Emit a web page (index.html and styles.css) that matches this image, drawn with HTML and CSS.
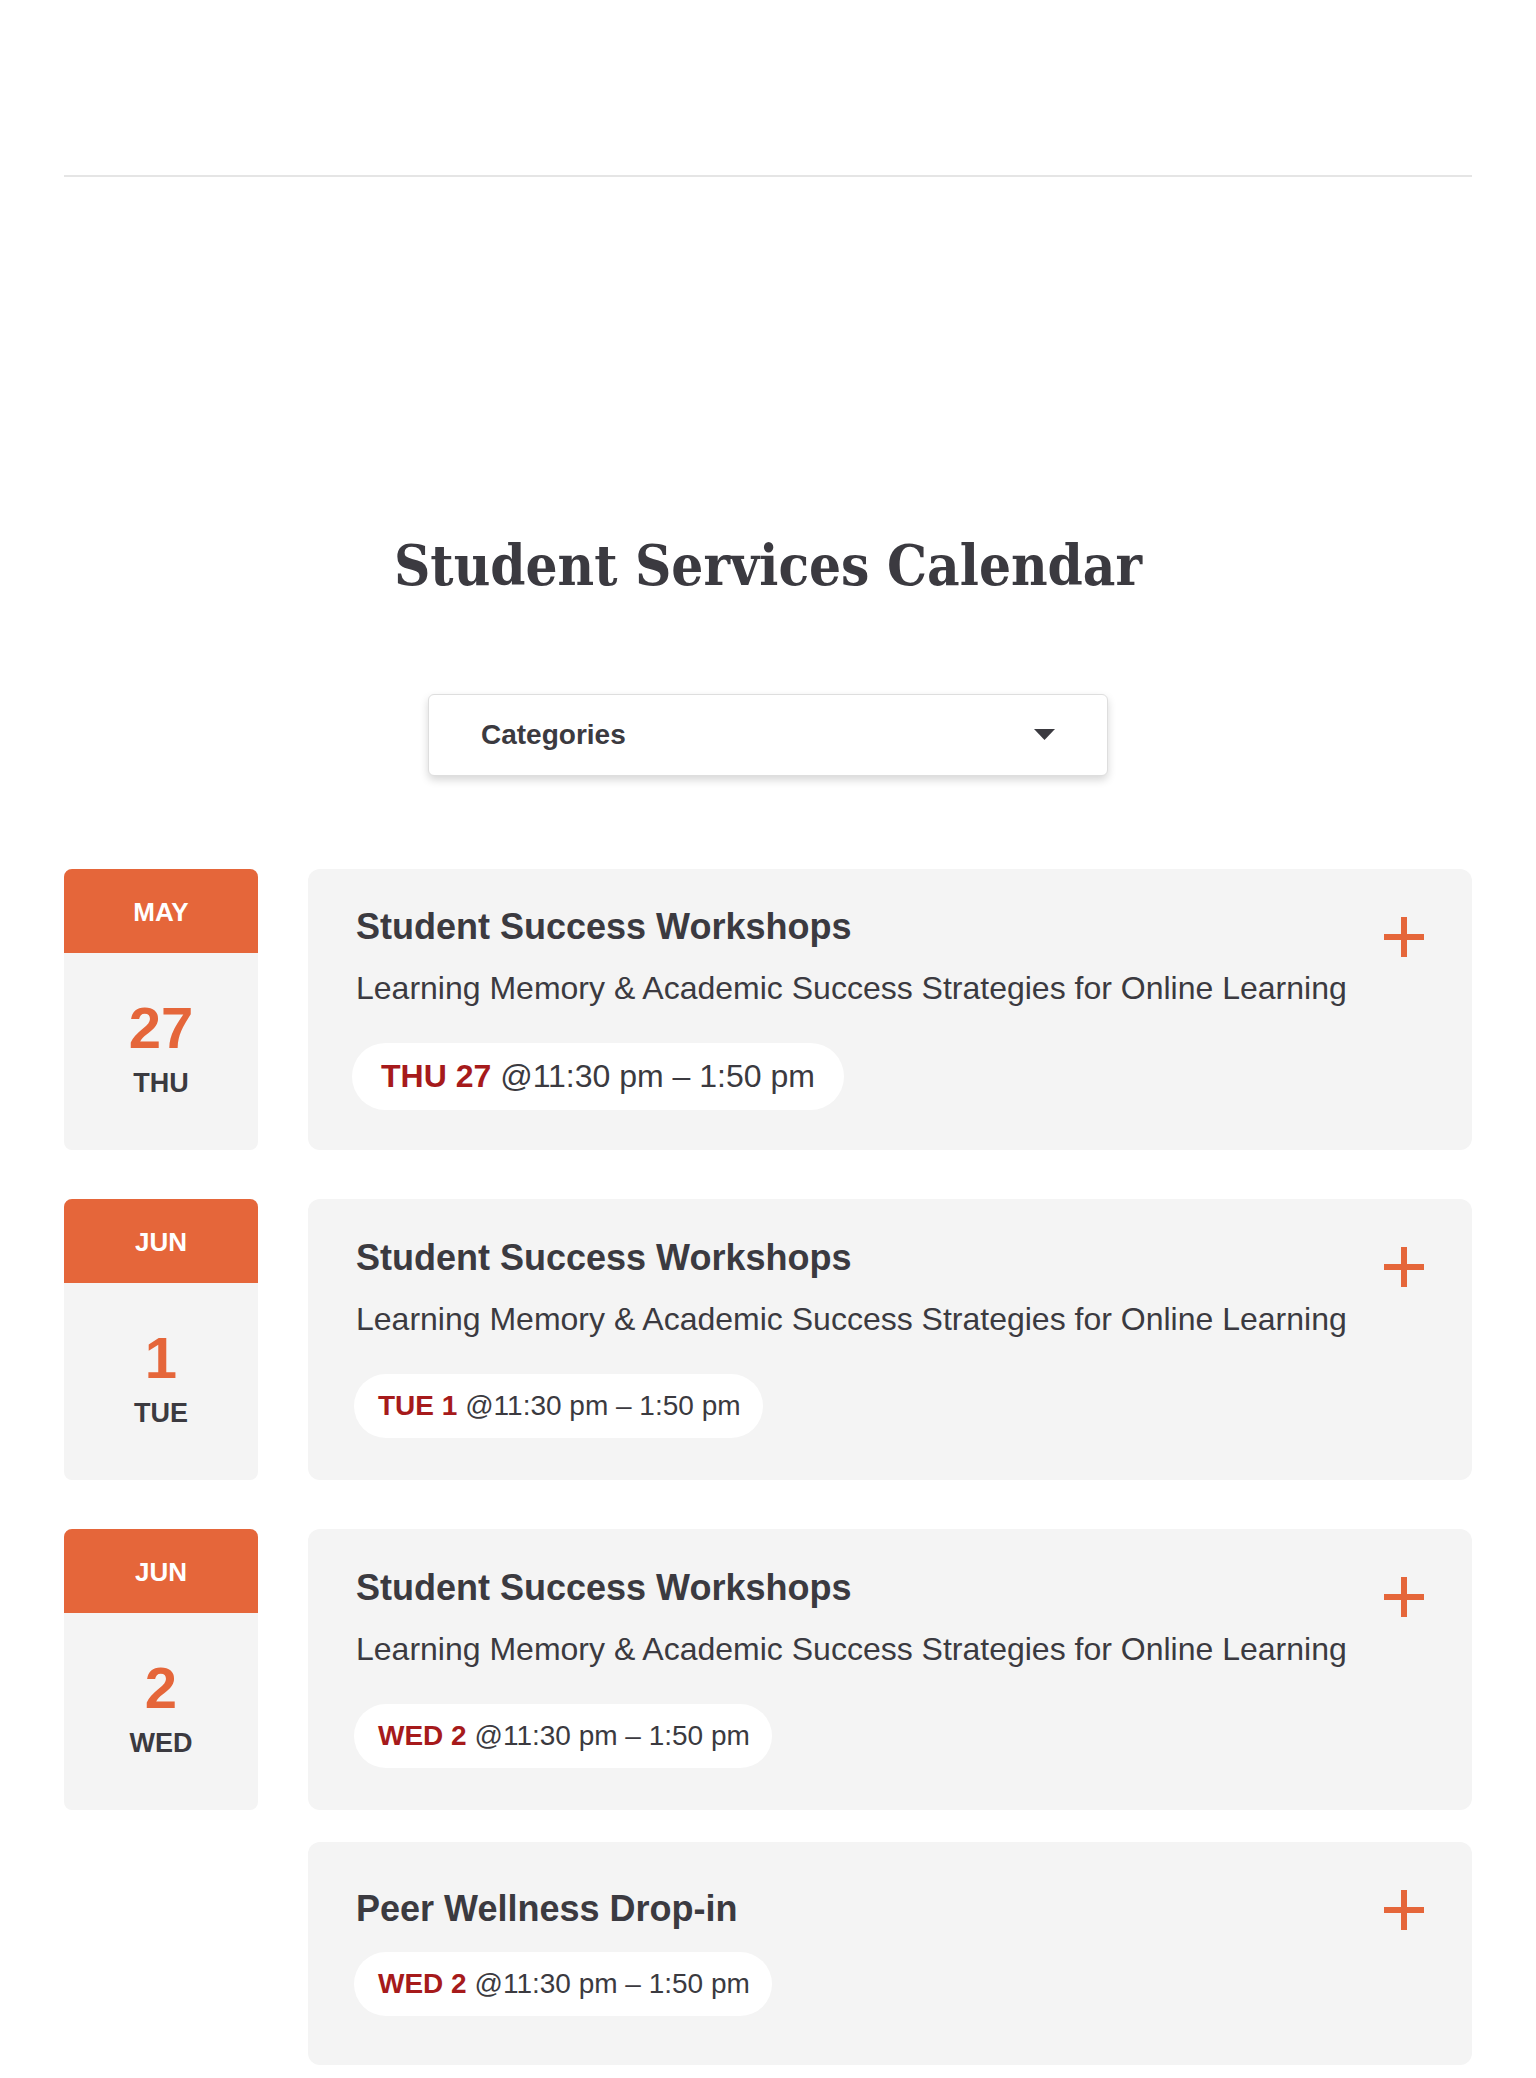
FILE: index.html
```html
<!DOCTYPE html>
<html lang="en">

<head>
    <meta charset="UTF-8">
    <meta name="viewport" content="width=device-width, initial-scale=1.0">
    <title>Student Services Calendar</title>
    <link rel="stylesheet" href="styles.css">
</head>

<body>
    <header class="site-header"></header>

    <main class="calendar">
        <h1 class="calendar__title">Student Services Calendar</h1>

        <div class="calendar__filter">
            <button class="filter-select" type="button">
                Categories
                <svg class="filter-select__caret" viewBox="0 0 21 11" width="21" height="11">
                    <path d="M0 0h21L10.5 11z" fill="currentColor" />
                </svg>
            </button>
        </div>

        <div class="day-list">
            <section class="day">
                <div class="date-box">
                    <div class="date-box__month">MAY</div>
                    <div class="date-box__body">
                        <div class="date-box__num">27</div>
                        <div class="date-box__weekday">THU</div>
                    </div>
                </div>
                <div class="day__events">
                    <article class="event-card event-card--detailed">
                        <h2 class="event-card__title">Student Success Workshops</h2>
                        <p class="event-card__desc">Learning Memory &amp; Academic Success Strategies for Online Learning</p>
                        <div class="event-time event-time--lg"><strong>THU 27</strong> @11:30 pm – 1:50 pm</div>
                        <span class="event-card__plus"></span>
                    </article>
                </div>
            </section>

            <section class="day">
                <div class="date-box">
                    <div class="date-box__month">JUN</div>
                    <div class="date-box__body">
                        <div class="date-box__num">1</div>
                        <div class="date-box__weekday">TUE</div>
                    </div>
                </div>
                <div class="day__events">
                    <article class="event-card event-card--detailed">
                        <h2 class="event-card__title">Student Success Workshops</h2>
                        <p class="event-card__desc">Learning Memory &amp; Academic Success Strategies for Online Learning</p>
                        <div class="event-time"><strong>TUE 1</strong> @11:30 pm – 1:50 pm</div>
                        <span class="event-card__plus"></span>
                    </article>
                </div>
            </section>

            <section class="day">
                <div class="date-box">
                    <div class="date-box__month">JUN</div>
                    <div class="date-box__body">
                        <div class="date-box__num">2</div>
                        <div class="date-box__weekday">WED</div>
                    </div>
                </div>
                <div class="day__events">
                    <article class="event-card event-card--detailed">
                        <h2 class="event-card__title">Student Success Workshops</h2>
                        <p class="event-card__desc">Learning Memory &amp; Academic Success Strategies for Online Learning</p>
                        <div class="event-time"><strong>WED 2</strong> @11:30 pm – 1:50 pm</div>
                        <span class="event-card__plus"></span>
                    </article>
                    <article class="event-card">
                        <h2 class="event-card__title">Peer Wellness Drop-in</h2>
                        <div class="event-time"><strong>WED 2</strong> @11:30 pm – 1:50 pm</div>
                        <span class="event-card__plus"></span>
                    </article>
                </div>
            </section>
        </div>
    </main>
</body>

</html>
```

FILE: styles.css
```css
:root {
    --text-color: #3b3a40;
    --accent-color: #e5663a;
    --red-color: #a61a1b;
    --card-bg: #f4f4f4;
    --line-color: #e5e5e5;
    --white-color: #fff;
}

body {
    margin: 0;
    font-family: 'Liberation Sans', Arial, sans-serif;
    color: var(--text-color);
    background: var(--white-color);
}

.site-header {
    height: 175px;
    margin: 0 64px;
    border-bottom: 2px solid var(--line-color);
}

.calendar {
    padding: 0 64px 60px;
}

.calendar__title {
    margin: 355px 0 0;
    text-align: center;
    font-family: 'DejaVu Serif Condensed', 'DejaVu Serif', serif;
    font-stretch: condensed;
    font-size: 56px;
    font-weight: 700;
    line-height: 1.2;
}

.calendar__filter {
    display: flex;
    justify-content: center;
    margin-top: 95px;
}

.filter-select {
    width: 680px;
    height: 82px;
    display: flex;
    align-items: center;
    justify-content: space-between;
    padding: 0 52px 0 52px;
    background: var(--white-color);
    border: 1px solid #dedede;
    border-radius: 6px;
    box-shadow: 0 4px 8px rgba(0, 0, 0, 0.16);
    font-family: inherit;
    font-size: 28px;
    font-weight: 700;
    color: var(--text-color);
    cursor: pointer;
}

.filter-select__caret {
    display: block;
    margin-top: -2px;
}

.day-list {
    margin-top: 93px;
    display: flex;
    flex-direction: column;
    gap: 49px;
}

.day {
    display: flex;
    align-items: flex-start;
    gap: 50px;
}

.date-box {
    width: 194px;
    flex-shrink: 0;
    border-radius: 8px;
    overflow: hidden;
    background: var(--card-bg);
    text-align: center;
    font-weight: 700;
}

.date-box__month {
    height: 84px;
    line-height: 86px;
    background: var(--accent-color);
    color: var(--white-color);
    font-size: 26px;
}

.date-box__body {
    padding: 46px 0 50px;
}

.date-box__num {
    font-size: 58px;
    line-height: 58px;
    color: var(--accent-color);
}

.date-box__weekday {
    margin-top: 10px;
    font-size: 27px;
    line-height: 1.2;
}

.day__events {
    flex: 1;
    display: flex;
    flex-direction: column;
    gap: 32px;
}

.event-card {
    position: relative;
    min-height: 223px;
    box-sizing: border-box;
    padding: 36px 48px 40px;
    display: flex;
    flex-direction: column;
    justify-content: center;
    align-items: flex-start;
    background: var(--card-bg);
    border-radius: 12px;
}

.event-card--detailed {
    min-height: 281px;
}

.event-card__title {
    margin: 0 0 22px;
    font-size: 36px;
    font-weight: 700;
}

.event-card__desc {
    margin: 0 0 36px;
    font-size: 32px;
}

.event-time {
    margin-left: -2px;
    padding: 11px 22px 11px 24px;
    background: var(--white-color);
    border-radius: 40px;
    font-size: 28px;
    line-height: 1.5;
}

.event-time strong {
    color: var(--red-color);
}

.event-time--lg {
    margin-left: -4px;
    padding: 9.5px 29px;
    font-size: 32px;
}

/* plus sign in the top right corner of each card */
.event-card__plus {
    position: absolute;
    top: 48px;
    right: 48px;
    width: 40px;
    height: 40px;
}

.event-card__plus::before,
.event-card__plus::after {
    content: '';
    position: absolute;
    background: var(--accent-color);
}

.event-card__plus::before {
    left: 0;
    top: 17px;
    width: 40px;
    height: 6px;
}

.event-card__plus::after {
    left: 17px;
    top: 0;
    width: 6px;
    height: 40px;
}
```
